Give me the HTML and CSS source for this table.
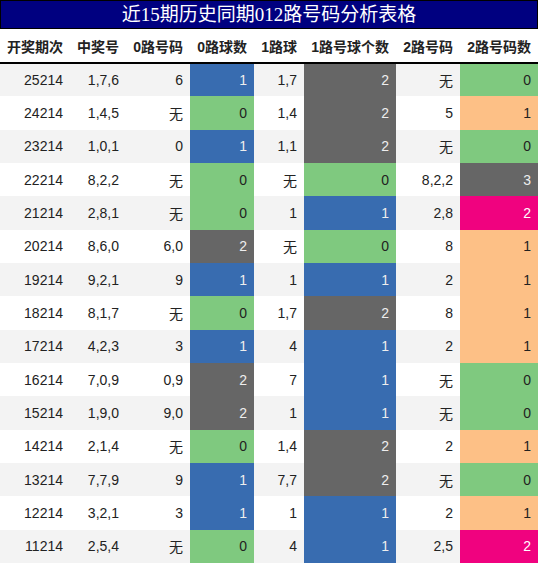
FILE: index.html
```html
<!DOCTYPE html>
<html>
<head>
  <meta charset="UTF-8">
  <title>012路号码分析</title>
  <link rel="stylesheet" href="styles.css">
</head>
<body>
  <div class="title">近15期历史同期012路号码分析表格</div>
  <table class="road_table">
    <colgroup>
      <col class="w70"><col class="w56"><col class="w64"><col class="w64">
      <col class="w50"><col class="w92"><col class="w64"><col class="w78">
    </colgroup>
    <thead>
      <tr>
        <th>开奖期次</th><th>中奖号</th><th>0路号码</th><th>0路球数</th>
        <th>1路球</th><th>1路号球个数</th><th>2路号码</th><th>2路号码数</th>
      </tr>
    </thead>
    <tbody>
      <tr><td>25214</td><td>1,7,6</td><td>6</td><td class="blue">1</td><td>1,7</td><td class="gray">2</td><td>无</td><td class="green">0</td></tr>
      <tr><td>24214</td><td>1,4,5</td><td>无</td><td class="green">0</td><td>1,4</td><td class="gray">2</td><td>5</td><td class="orange">1</td></tr>
      <tr><td>23214</td><td>1,0,1</td><td>0</td><td class="blue">1</td><td>1,1</td><td class="gray">2</td><td>无</td><td class="green">0</td></tr>
      <tr><td>22214</td><td>8,2,2</td><td>无</td><td class="green">0</td><td>无</td><td class="green">0</td><td>8,2,2</td><td class="gray">3</td></tr>
      <tr><td>21214</td><td>2,8,1</td><td>无</td><td class="green">0</td><td>1</td><td class="blue">1</td><td>2,8</td><td class="pink">2</td></tr>
      <tr><td>20214</td><td>8,6,0</td><td>6,0</td><td class="gray">2</td><td>无</td><td class="green">0</td><td>8</td><td class="orange">1</td></tr>
      <tr><td>19214</td><td>9,2,1</td><td>9</td><td class="blue">1</td><td>1</td><td class="blue">1</td><td>2</td><td class="orange">1</td></tr>
      <tr><td>18214</td><td>8,1,7</td><td>无</td><td class="green">0</td><td>1,7</td><td class="gray">2</td><td>8</td><td class="orange">1</td></tr>
      <tr><td>17214</td><td>4,2,3</td><td>3</td><td class="blue">1</td><td>4</td><td class="blue">1</td><td>2</td><td class="orange">1</td></tr>
      <tr><td>16214</td><td>7,0,9</td><td>0,9</td><td class="gray">2</td><td>7</td><td class="blue">1</td><td>无</td><td class="green">0</td></tr>
      <tr><td>15214</td><td>1,9,0</td><td>9,0</td><td class="gray">2</td><td>1</td><td class="blue">1</td><td>无</td><td class="green">0</td></tr>
      <tr><td>14214</td><td>2,1,4</td><td>无</td><td class="green">0</td><td>1,4</td><td class="gray">2</td><td>2</td><td class="orange">1</td></tr>
      <tr><td>13214</td><td>7,7,9</td><td>9</td><td class="blue">1</td><td>7,7</td><td class="gray">2</td><td>无</td><td class="green">0</td></tr>
      <tr><td>12214</td><td>3,2,1</td><td>3</td><td class="blue">1</td><td>1</td><td class="blue">1</td><td>2</td><td class="orange">1</td></tr>
      <tr><td>11214</td><td>2,5,4</td><td>无</td><td class="green">0</td><td>4</td><td class="blue">1</td><td>2,5</td><td class="pink">2</td></tr>
    </tbody>
  </table>
</body>
</html>
```

FILE: styles.css
```css
body {
  margin: 0;
  font-family: "Liberation Sans", "Noto Sans CJK SC", sans-serif;
  font-size: 14px;
  color: #222;
  background: #fff;
}

.title {
  box-sizing: border-box;
  width: 538px;
  height: 29px;
  border: 1px solid #000;
  background: #000080;
  color: #fff;
  font: 19px/27px "Liberation Serif", "Noto Sans CJK SC", serif;
  text-align: center;
}

.road_table {
  width: 538px;
  table-layout: fixed;
  border-collapse: collapse;
}
  .w70 { width: 70px; }
  .w56 { width: 56px; }
  .w64 { width: 64px; }
  .w50 { width: 50px; }
  .w92 { width: 92px; }
  .w78 { width: 78px; }

  .road_table th,
  .road_table td {
    padding: 0 7px;
    text-align: right;
    white-space: nowrap;
  }
  .road_table th {
    height: 33px;
    font-weight: bold;
    color: #222;
    border-bottom: 2px solid #000;
  }
  .road_table tbody tr {
    height: 33.33px;
  }
  .road_table tbody tr:nth-child(odd) {
    background: #f3f3f3;
  }

  /* 路数颜色 */
  .road_table td.blue   { background: #386cb0; color: #eee; }
  .road_table td.green  { background: #7fc97f; color: #222; }
  .road_table td.gray   { background: #666666; color: #eee; }
  .road_table td.orange { background: #fdc086; color: #222; }
  .road_table td.pink   { background: #f0027f; color: #fff; }
```
